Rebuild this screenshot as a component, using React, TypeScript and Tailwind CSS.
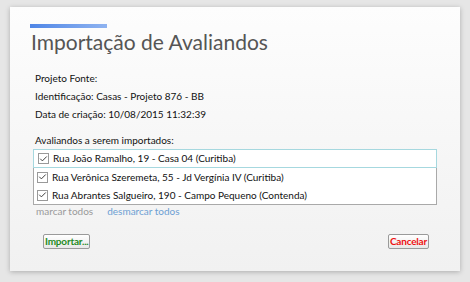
import { Check } from 'lucide-react';

const avaliandos = [
  'Rua João Ramalho, 19 - Casa 04 (Curitiba)',
  'Rua Verônica Szeremeta, 55 - Jd Vergínia IV (Curitiba)',
  'Rua Abrantes Salgueiro, 190 - Campo Pequeno (Contenda)',
];

function CheckBox() {
  return (
    <span className="w-[11px] h-[11px] border border-[#999] bg-white flex items-center justify-center shrink-0">
      <Check className="w-[10px] h-[10px] text-[#333]" strokeWidth={2.5} />
    </span>
  );
}

export default function App() {
  return (
    <div className="w-[470px] h-[282px] bg-[#e6e6e6] pt-[7px] pl-[10px] font-['Lato',sans-serif]">
      {/* Dialog */}
      <div className="w-[450px] h-[264px] bg-gradient-to-b from-[#fdfdfd] to-[#f1f1f1] shadow-[0_1px_5px_rgba(0,0,0,0.25)] pt-[17px] px-[20px]">
        <div className="w-[77px] h-[4px] bg-gradient-to-r from-[#4f86e6] to-[#8fb3f0]" />
        <h1 className="text-[21px] leading-[26px] text-[#555] mt-[1px] pl-[1px]">
          Importação de Avaliandos
        </h1>

        <div className="mt-[14px] pl-[5px] text-[10px] text-[#111] leading-[18px]">
          <p>Projeto Fonte:</p>
          <p>Identificação: Casas - Projeto 876 - BB</p>
          <p>Data de criação: 10/08/2015 11:32:39</p>
        </div>

        <p className="mt-[10px] pl-[5px] text-[10px] text-[#111] leading-[14px]">Avaliandos a serem importados:</p>

        <div className="mt-[2px] ml-[3px] w-[404px] border border-[#a9a9a9] bg-white text-[10px] text-[#111]">
          {avaliandos.map((a, i) => (
            <div
              key={a}
              className={`flex items-center gap-[4px] h-[18px] pl-[3px] ${
                i === 0 ? 'border border-[#a6d8df] -m-px mb-0 h-[19px] pl-[4px]' : ''
              }`}
            >
              <CheckBox />
              <span>{a}</span>
            </div>
          ))}
        </div>

        <div className="flex gap-[14px] pl-[6px] -mt-[1px] text-[10px] leading-[14px]">
          <span className="text-[#9a9a9a]">marcar todos</span>
          <span className="text-[#6d9fd3]">desmarcar todos</span>
        </div>

        <div className="flex justify-between mt-[16px] pl-[13px] pr-[11px]">
          <button className="h-[15px] px-[1px] border border-[#9a9a9a] rounded-[2px] bg-gradient-to-b from-white to-[#e8e8e8] text-[10px] font-bold text-[#1f8a1f] leading-[13px] tracking-[-0.2px]">
            Importar...
          </button>
          <button className="h-[15px] px-[1px] border border-[#9a9a9a] rounded-[2px] bg-gradient-to-b from-white to-[#e8e8e8] text-[10px] font-bold text-[#ee1111] leading-[13px] tracking-[-0.2px]">
            Cancelar
          </button>
        </div>
      </div>
    </div>
  );
}
